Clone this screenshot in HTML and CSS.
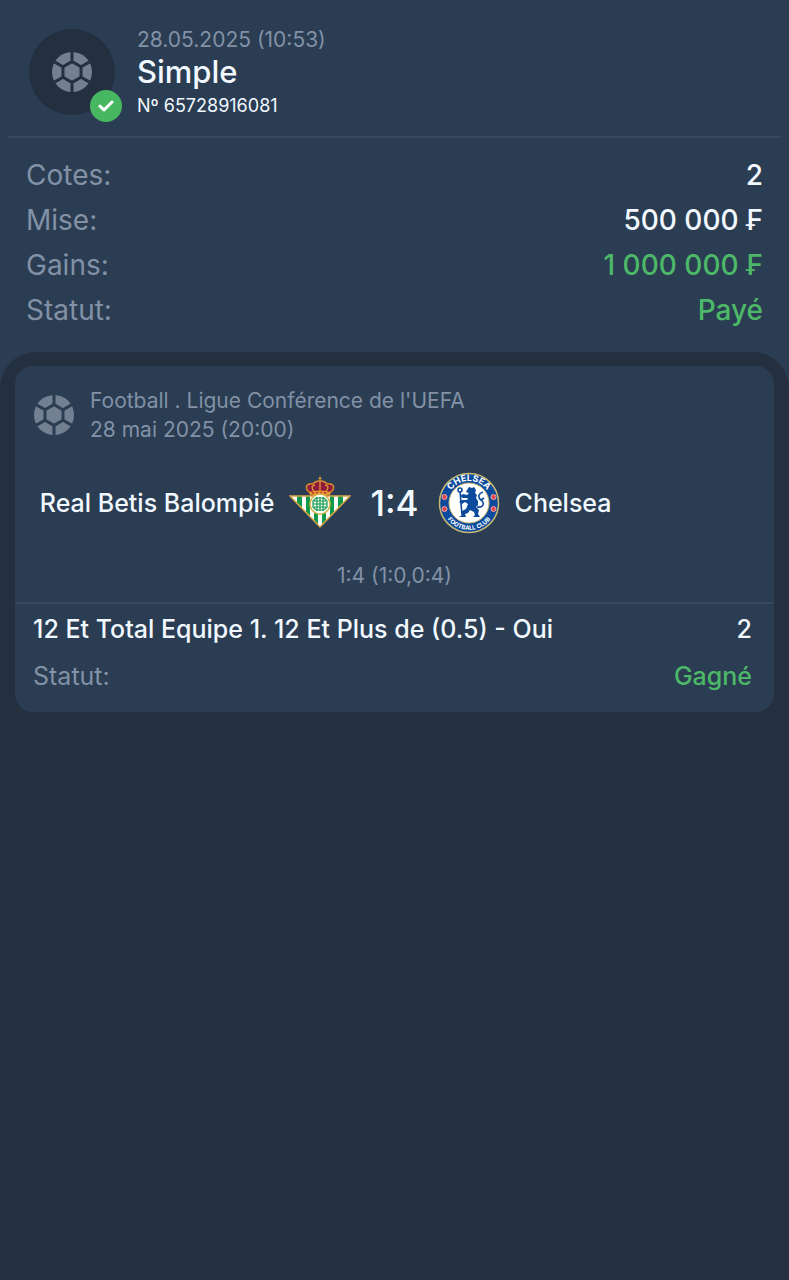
FILE: index.html
```html
<!DOCTYPE html>
<html lang="fr">
<head>
    <meta charset="utf-8">
    <meta name="viewport" content="width=device-width, initial-scale=1">
    <title>Simple</title>
    <link rel="stylesheet" href="styles.css">
</head>
<body>
    <svg class="sprite" aria-hidden="true">
        <symbol id="ball" viewBox="0 0 40 40">
            <mask id="seams">
                <circle cx="20" cy="20" r="20" fill="#fff"/>
                <path d="M20 9.6 29 14.8V25.2L20 30.4 11 25.2V14.8ZM20 9.6V0M29 14.8 38 9.6M29 25.2 38 30.4M20 30.4V40M11 25.2 2 30.4M11 14.8 2 9.6" fill="none" stroke="#000" stroke-width="3"/>
            </mask>
            <rect width="40" height="40" fill="currentColor" mask="url(#seams)"/>
        </symbol>
    </svg>

    <header class="bet">
        <div class="avatar">
            <svg class="ball"><use href="#ball"/></svg>
            <span class="badge">
                <svg width="16" height="12" viewBox="0 0 16 12"><path d="M2 6.2 6 10 14 2" fill="none" stroke="#fff" stroke-width="3" stroke-linecap="round" stroke-linejoin="round"/></svg>
            </span>
        </div>
        <div class="bet-info">
            <div class="date">28.05.2025 (10:53)</div>
            <h1>Simple</h1>
            <div class="number">Nº 65728916081</div>
        </div>
    </header>

    <dl class="summary">
        <div class="row"><dt>Cotes:</dt><dd>2</dd></div>
        <div class="row"><dt>Mise:</dt><dd>500 000 ₣</dd></div>
        <div class="row"><dt>Gains:</dt><dd class="win">1 000 000 ₣</dd></div>
        <div class="row"><dt>Statut:</dt><dd class="win">Payé</dd></div>
    </dl>

    <main class="events">
        <article class="card">
            <div class="league">
                <svg class="ball"><use href="#ball"/></svg>
                <div>
                    <div>Football . Ligue Conférence de l'UEFA</div>
                    <div>28 mai 2025 (20:00)</div>
                </div>
            </div>

            <div class="match">
                <div class="team home">
                    <span>Real Betis Balompié</span>
                    <svg class="crest" viewBox="0 0 62 62">
                        <!-- crown -->
                        <path d="M21 21C15 16 17 11 24 12 26 9 28 9 31 9S36 9 38 12C45 11 47 16 41 21Z" fill="#8d1d3c" stroke="#d98a2e" stroke-width="1.5"/>
                        <path d="M26 20C22 17 22 14 26 13M36 20C40 17 40 14 36 13M31 20V10" fill="none" stroke="#e8a02f" stroke-width="1.2"/>
                        <path d="M31 4.500V9M29.500 6.500H32.500" stroke="#e8a02f" stroke-width="1.2"/>
                        <path d="M20 20Q31 17 42 20L41 23H21Z" fill="#e3952c"/>
                        <path d="M23 21H39" stroke="#c7352f" stroke-width="1.5" stroke-dasharray="2 2"/>
                        <!-- shield -->
                        <clipPath id="shield"><path d="M1 24H61L31 55Z"/></clipPath>
                        <g clip-path="url(#shield)">
                            <path d="M0 23H62V56H0Z" fill="#fff"/>
                            <path d="M8 23H13V56H8ZM17 23H21V56H17ZM25 23H29V56H25ZM33 23H37V56H33ZM41 23H45V56H41ZM49 23H54V56H49Z" fill="#119a4b"/>
                        </g>
                        <path d="M1 24H61L31 55Z" fill="none" stroke="#d9a44a" stroke-width="1.5"/>
                        <circle cx="31" cy="32" r="10" fill="#fff" stroke="#d9b44a" stroke-width="1.5"/>
                        <path d="M28 25V39M34 25V39M31 25V39M24 29H38M24 32H38M24 35H38M27 26H35L38 29V35L35 38H27L24 35V29Z" fill="none" stroke="#119a4b" stroke-width="1.2"/>
                    </svg>
                </div>
                <div class="score">1:4</div>
                <div class="team">
                    <svg class="crest" viewBox="0 0 62 62">
                        <circle cx="31" cy="31" r="29.5" fill="#0b4a9c" stroke="#c9b873" stroke-width="1.5"/>
                        <circle cx="31" cy="31" r="20" fill="#fff" stroke="#c9b873"/>
                        <path id="arc-top" d="M9 31A22 22 0 0 1 53 31" fill="none"/>
                        <path id="arc-bottom" d="M4 31A27 27 0 0 0 58 31" fill="none"/>
                        <text class="crest-name"><textPath href="#arc-top" startOffset="50%">CHELSEA</textPath></text>
                        <text class="crest-club"><textPath href="#arc-bottom" startOffset="50%">FOOTBALL CLUB</textPath></text>
                        <g fill="#e0454f" stroke="#f1a5a8">
                            <circle cx="6.5" cy="25" r="2.5"/><circle cx="6.5" cy="37" r="2.5"/>
                            <circle cx="55.5" cy="25" r="2.5"/><circle cx="55.5" cy="37" r="2.5"/>
                        </g>
                        <!-- lion and staff -->
                        <path d="M29 18 31 15 34 16 36 15 38 18 37 21 39 23 38 26 40 29 40 33 38 35 41 38 40 42 42 45H35L37 43 36 40 32 38 30 41 27 42 28 45H21L24 43 24 39 28 37 30 32 27 30 24 32 21 30 24 28 29 28 30 26 25 26 22 24 25 22 29 23 31 21 28 20Z" fill="#0b4a9c"/>
                        <path d="M22 19 24 43M39 35C47 36 46 30 43 28 39 25 41 21 45 20M43 28 46 26" fill="none" stroke="#0b4a9c" stroke-width="1.6"/>
                        <circle cx="22" cy="18" r="2" fill="#fff" stroke="#0b4a9c" stroke-width="1.6"/>
                    </svg>
                    <span>Chelsea</span>
                </div>
            </div>

            <div class="periods">1:4 (1:0,0:4)</div>

            <dl class="market">
                <div class="row"><dt class="pick">12 Et Total Equipe 1. 12 Et Plus de (0.5) - Oui</dt><dd>2</dd></div>
                <div class="row"><dt>Statut:</dt><dd class="win">Gagné</dd></div>
            </dl>
        </article>
    </main>
</body>
</html>
```
FILE: styles.css
```css
* {
    box-sizing: border-box;
}
body {
    margin: 0;
    min-height: 100vh;
    display: flex;
    flex-direction: column;
    background: #2a3d52;
    color: #f2f8ff;
    font-family: Inter, "Liberation Sans", sans-serif;
}
h1, dl, dd {
    margin: 0;
}
.sprite {
    position: absolute;
    width: 0;
    height: 0;
}
.ball {
    width: 40px;
    height: 40px;
    color: #728092;
    flex: none;
}

/* bet header */
.bet {
    display: flex;
    align-items: flex-start;
    gap: 22px;
    margin: 0 8px;
    padding: 26px 21px 14px;
    border-bottom: 2px solid #35495f;
}
.avatar {
    position: relative;
    display: flex;
    align-items: center;
    justify-content: center;
    width: 86px;
    height: 86px;
    margin-top: 3px;
    border-radius: 50%;
    background: #24303f;
}
.badge {
    position: absolute;
    right: -7px;
    bottom: -7px;
    display: flex;
    align-items: center;
    justify-content: center;
    width: 32px;
    height: 32px;
    border-radius: 50%;
    background: #48b761;
}
.date {
    color: #8291a6;
    font-size: 21px;
    line-height: 28px;
}
h1 {
    font-size: 31px;
    font-weight: 500;
    line-height: 36px;
}
.number {
    font-size: 18px;
    line-height: 32px;
}

/* totals */
.summary {
    padding: 15px 26px 19px;
    font-size: 28px;
    line-height: 45px;
}
.row {
    display: flex;
    justify-content: space-between;
}
dt {
    color: #8291a6;
}
dd {
    font-weight: 500;
}
.win {
    color: #4db868;
}

/* events */
.events {
    flex: 1;
    padding: 14px 15px;
    border-radius: 36px 36px 0 0;
    background: #24303f;
}
.card {
    border-radius: 18px;
    background: #2a3d52;
}
.league {
    display: flex;
    align-items: center;
    gap: 16px;
    padding: 20px 19px;
    color: #8291a6;
    font-size: 21px;
    line-height: 29px;
}
.match {
    display: grid;
    grid-template-columns: 1fr auto 1fr;
    align-items: center;
    gap: 19px;
    padding: 8px 18px;
    font-size: 25px;
    font-weight: 500;
}
.team {
    display: flex;
    align-items: center;
    gap: 15px;
}
.home {
    justify-content: flex-end;
}
.score {
    font-size: 35px;
}
.crest {
    width: 62px;
    height: 62px;
    flex: none;
}
.crest-name {
    fill: #fff;
    font-size: 9px;
    font-weight: 700;
    text-anchor: middle;
}
.crest-club {
    fill: #fff;
    font-size: 6px;
    font-weight: 700;
    text-anchor: middle;
}
.periods {
    padding: 20px 18px 12px;
    color: #8291a6;
    font-size: 21px;
    line-height: 28px;
    text-align: center;
}
.market {
    padding: 2px 22px 12px 18px;
    border-top: 2px solid #35495f;
    font-size: 25px;
    line-height: 47px;
}
.pick {
    color: #f2f8ff;
    font-weight: 500;
}
```
